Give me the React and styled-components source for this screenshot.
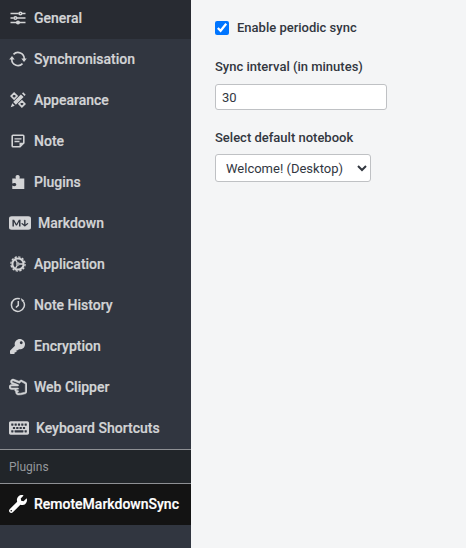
import React from "react";
import styled, { createGlobalStyle } from "styled-components";
import { FaKey, FaWrench, FaRegHandScissors, FaKeyboard } from "react-icons/fa";
import { BsMarkdownFill } from "react-icons/bs";

const GlobalStyle = createGlobalStyle`
  * { box-sizing: border-box; }
  body { margin: 0; font-family: Roboto, sans-serif; overflow: hidden; }
`;

const Screen = styled.div`
  display: flex;
  height: 548px;
  background: #f4f5f6;
`;

const Sidebar = styled.nav`
  display: flex;
  flex-direction: column;
  width: 191px;
  flex: none;
  background: #313640;
`;

const NavItem = styled.a`
  display: flex;
  align-items: center;
  height: ${(p) => (p.$first ? 39 : 41)}px;
  padding: 0 0 ${(p) => (p.$first ? 3 : 1)}px 8px;
  flex: none;
  color: ${(p) => (p.$selected ? "#ffffff" : "#d3d4d6")};
  background: ${(p) => (p.$selected ? "#131313" : p.$first ? "#282b32" : "transparent")};
  cursor: pointer;
`;

const IconBox = styled.span`
  display: flex;
  align-items: center;
  justify-content: center;
  flex: none;
  width: ${(p) => p.$width || 19}px;
  height: 18px;
  margin-right: 7px;
  svg { display: block; flex: none; }
`;

const MarkdownIcon = styled(BsMarkdownFill)`
  width: 22px;
  height: 18px;
`;

const NavLabel = styled.span`
  font-size: 14px;
  font-weight: 500;
  line-height: 18px;
  white-space: nowrap;
  -webkit-text-stroke: 0.2px currentColor;
`;

const SectionHeader = styled.div`
  display: flex;
  align-items: center;
  height: 35px;
  flex: none;
  padding-left: 9px;
  border-top: 1px solid #8e9094;
  border-bottom: 1px solid #8e9094;
  background: #212529;
  color: #95989c;
  font-size: 12px;
`;

const Settings = styled.main`
  display: flex;
  flex-direction: column;
  align-items: flex-start;
  flex: 1;
  padding: 19px 0 0 24px;
  color: #32373f;
`;

const CheckRow = styled.label`
  display: flex;
  align-items: center;
  height: 18px;
  margin-bottom: 21px;
  font-size: 13px;
  font-weight: 500;
`;

const CheckText = styled.span`
  line-height: 16px;
`;

const Checkbox = styled.input`
  width: 14px;
  height: 14px;
  margin: 0 8px 0 0;
  accent-color: #0075ff;
`;

const FieldLabel = styled.label`
  height: 18px;
  line-height: 18px;
  margin-bottom: ${(p) => p.$gap || 8}px;
  font-size: 13px;
  font-weight: 500;
`;

const NumberField = styled.input`
  width: 172px;
  height: 26px;
  margin: 0 0 19px;
  padding: 0 6px;
  border: 1px solid #bfc1c4;
  border-radius: 3px;
  outline: none;
  background: #fff;
  color: #32373f;
  font: 13px Roboto, sans-serif;
`;

const NotebookSelect = styled.select`
  width: 156px;
  height: 28px;
  padding: 0 0 0 6px;
  border: 1px solid #bfc1c4;
  border-radius: 3px;
  background: #fff;
  color: #32373f;
  font: 13px Roboto, sans-serif;
`;

const Glyph = ({ w = 16, h = 16, children }) => (
  <svg width={w} height={h} viewBox={`0 0 ${w} ${h}`} fill="none" stroke="currentColor" strokeWidth="1.6">
    {children}
  </svg>
);

const SlidersIcon = () => (
  <Glyph>
    <path d="M.5 3.5h8.2M12 3.5h3.5M.5 8h3.2M7 8h8.5M.5 12.5h6M10 12.5h5.5" />
    <circle cx="10.4" cy="3.5" r="1.3" />
    <circle cx="5.4" cy="8" r="1.3" />
    <circle cx="8" cy="12.5" r="1.3" fill="currentColor" />
  </Glyph>
);

const SyncIcon = () => (
  <Glyph w={18}>
    <path d="M4.5 3.4A6.2 6.2 0 0 1 15.2 8M13.5 12.6A6.2 6.2 0 0 1 2.8 8" />
    <path d="M12.3 7.5h5.5L15 11zM.2 8.6h5.5L3 5z" fill="currentColor" stroke="none" />
  </Glyph>
);

const DesignIcon = () => (
  <Glyph>
    <path d="M1.2 4.1 4.1 1.2 7 4 4.1 7zM9 11.8 11.9 9l2.9 2.9-2.9 2.9z" strokeWidth="1.7" />
    <path d="M12.1.7 2.4 10.4l3.2 3.2 9.700-9.700z" fill="#313640" stroke="none" />
    <path d="m10.900 2.400 2.700 2.700-7.700 7.700-2.700-2.700zM13.200.3l2.500 2.500-1.200 1.200L12 1.500zM2.300 11.300l2.400 2.400-4 1.600z" fill="currentColor" stroke="none" />
  </Glyph>
);

const NoteIcon = () => (
  <Glyph w={14} h={14}>
    <path d="M2 1.2h10q.8 0 .8.8v7L9 12.8H2q-.8 0-.8-.8V2q0-.8.8-.8z" />
    <path d="M3.5 4.8h7M3.5 7.5h5" strokeWidth="1.3" />
    <path d="M8.5 13V8.7H13z" fill="currentColor" stroke="none" />
  </Glyph>
);

const PuzzleIcon = () => (
  <Glyph>
    <path
      d="M2.3 4.6H6C5 2.6 5.8 1 7.6 1s2.8 1.6 1.8 3.6h4.9V15H2.3v-3.4c2 1.2 4 .5 4-1S4.3 8.4 2.3 9.6z"
      fill="currentColor"
      stroke="none"
    />
  </Glyph>
);

const GearIcon = () => (
  <Glyph>
    <circle cx="8" cy="8" r="5.6" strokeWidth="2" />
    <circle cx="8" cy="8" r="7.1" strokeWidth="1.3" strokeDasharray="2.3 1.418" />
    <circle cx="8" cy="8" r="1.2" strokeWidth="1.2" />
    <path d="M9.5 8h3.7M7.2 6.7 5.4 3.5M7.2 9.3l-1.8 3.2" strokeWidth="1.4" />
  </Glyph>
);

const HistoryIcon = () => (
  <Glyph>
    <path d="M9.8 1.7A6.5 6.5 0 1 0 13.3 4.3" strokeWidth="1.5" />
    <path d="M8.3 4v4.300L5.9 10.5" strokeWidth="1.5" />
    <path d="m10.6 1 3.7 2.6-2.2 1.3z" fill="currentColor" stroke="none" />
  </Glyph>
);

const sections = [
  { label: "General", icon: <SlidersIcon /> },
  { label: "Synchronisation", icon: <SyncIcon /> },
  { label: "Appearance", icon: <DesignIcon /> },
  { label: "Note", icon: <NoteIcon /> },
  { label: "Plugins", icon: <PuzzleIcon /> },
  { label: "Markdown", icon: <MarkdownIcon preserveAspectRatio="none" />, width: 23 },
  { label: "Application", icon: <GearIcon /> },
  { label: "Note History", icon: <HistoryIcon /> },
  { label: "Encryption", icon: <FaKey size={15} /> },
  { label: "Web Clipper", icon: <FaRegHandScissors size={18} stroke="currentColor" strokeWidth={14} /> },
  { label: "Keyboard Shortcuts", icon: <FaKeyboard size={20} />, width: 21 },
];

function NavButton({ label, icon, width, first, selected }) {
  return (
    <NavItem $first={first} $selected={selected}>
      <IconBox $width={width}>{icon}</IconBox>
      <NavLabel>{label}</NavLabel>
    </NavItem>
  );
}

export default function App() {
  return (
    <Screen>
      <GlobalStyle />
      <Sidebar>
        {sections.map((s, i) => (
          <NavButton key={s.label} {...s} first={i === 0} />
        ))}
        <SectionHeader>Plugins</SectionHeader>
        <NavButton label="RemoteMarkdownSync" icon={<FaWrench size={18} />} selected />
      </Sidebar>
      <Settings>
        <CheckRow>
          <Checkbox type="checkbox" defaultChecked />
          <CheckText>Enable periodic sync</CheckText>
        </CheckRow>
        <FieldLabel htmlFor="interval">Sync interval (in minutes)</FieldLabel>
        <NumberField id="interval" defaultValue="30" />
        <FieldLabel htmlFor="notebook" $gap={7}>Select default notebook</FieldLabel>
        <NotebookSelect id="notebook">
          <option>Welcome! (Desktop)</option>
        </NotebookSelect>
      </Settings>
    </Screen>
  );
}
